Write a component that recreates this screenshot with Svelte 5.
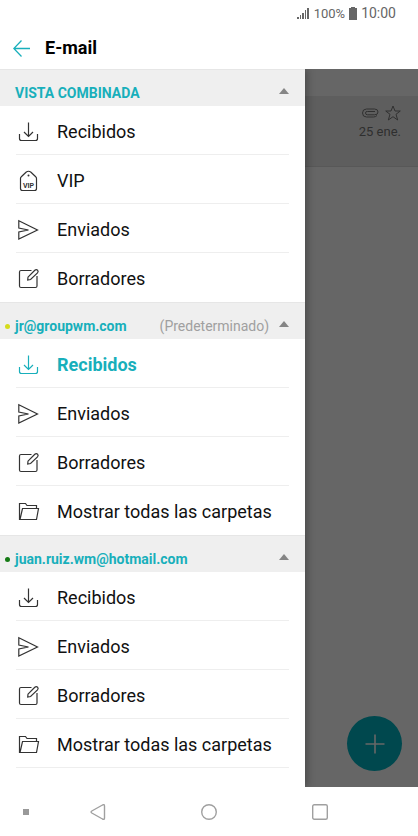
<script>
  const INBOX = { icon: 'inbox', label: 'Recibidos' };
  const SENT = { icon: 'sent', label: 'Enviados' };
  const DRAFTS = { icon: 'draft', label: 'Borradores' };
  const ALL = { icon: 'folder', label: 'Mostrar todas las carpetas' };

  const sections = [
    { title: 'VISTA COMBINADA', items: [INBOX, { icon: 'vip', label: 'VIP' }, SENT, DRAFTS] },
    { title: 'jr@groupwm.com', dot: 'yellow', note: '(Predeterminado)', items: [INBOX, SENT, DRAFTS, ALL] },
    { title: 'juan.ruiz.wm@hotmail.com', dot: 'green', items: [INBOX, SENT, DRAFTS, ALL] },
  ];

  let closed = $state([false, false, false]);
  let active = $state('1-0');
</script>

{#snippet icon(name)}
  <svg class="icon" viewBox="0 0 22 22" aria-hidden="true">
    {#if name === 'inbox'}
      <path d="M10.5 1.500v14M6 11l4.500 4.500L15 11M1.500 13v4.500q0 2 2 2h14q2 0 2-2v-4.500" />
    {:else if name === 'vip'}
      <path d="M2.500 8.500Q2.500 7.500 3.300 6.800L8 2.200Q10.500.3 13 2.200L17.700 6.800Q18.500 7.500 18.500 8.500V18.500Q18.500 20.500 16.500 20.500H4.500Q2.500 20.500 2.500 18.500Z" />
      <circle class="solid" cx="10.500" cy="5.500" r="1" />
      <text x="10.500" y="17.500" text-anchor="middle">VIP</text>
    {:else if name === 'sent'}
      <path d="M.8 1.800L19.500 11L.8 20V13L10.500 11L.8 9Z" />
    {:else if name === 'draft'}
      <path d="M13.500 2.500H3Q1.500 2.500 1.500 4V18Q1.500 19.500 3 19.500H17.500Q19 19.500 19 18V8" />
      <path d="M10 9.200L16.800 2.300Q18.300 1 19.600 2.200Q20.700 3.500 19.500 4.900L12.600 11.500L9.700 12Z" />
    {:else}
      <path d="M3 18.500H1.500V2.500H7.500L9 4.500H18.500V7M2 18.500L4.500 7.500H20.500L18.500 18.500Z" />
    {/if}
  </svg>
{/snippet}

<div class="app">
  <div class="status">
    <svg width="13" height="12" viewBox="0 0 13 12" aria-hidden="true">
      <path d="M0 10h2v2H0zM3 8h1v4H3zM5 6h2v6H5zM8 3h1v9H8zM10 1h2v11h-2z" />
    </svg>
    <span class="battery">100%</span>
    <svg width="8" height="13" viewBox="0 0 8 13" aria-hidden="true">
      <path d="M2 0h4v1h2v12H0V1h2z" />
    </svg>
    <span class="clock">10:00</span>
  </div>

  <header class="topbar">
    <button class="back" aria-label="Atrás">
      <svg width="17" height="17" viewBox="0 0 17 17" aria-hidden="true">
        <path d="M17 8.500H1M8.500.5L.8 8.500L8.500 16.500" />
      </svg>
    </button>
    <h1>E-mail</h1>
  </header>

  <main>
    <div class="mailbox">
      <div class="message">
        <div class="flags">
          <svg width="17" height="10" viewBox="0 0 17 10" aria-hidden="true">
            <path d="M15 7.500Q13.500 9 11.500 9H4.500Q.5 9 .5 5T4.500 1H12.500Q16 1 16 4T12.500 6.800H5.500Q3.500 6.800 3.500 5T5.500 3.500H13" />
          </svg>
          <svg width="16" height="16" viewBox="0 0 16 16" aria-hidden="true">
            <path d="M8 1L10 6H15.300L11 9.300L12.700 15L8 11.700L3.300 15L5 9.300L.7 6H6Z" />
          </svg>
        </div>
        <time>25 ene.</time>
      </div>
      <button class="compose" aria-label="Redactar">
        <svg width="20" height="20" viewBox="0 0 20 20" aria-hidden="true">
          <path d="M10 .5V19.500M.5 10H19.500" />
        </svg>
      </button>
    </div>

    <div class="scrim"></div>

    <nav class="drawer">
      {#each sections as section, s}
        <section>
          <button class="section-head" aria-expanded={!closed[s]} onclick={() => (closed[s] = !closed[s])}>
            <span class="dot {section.dot ?? ''}"></span>
            <span class="section-title">{section.title}</span>
            {#if section.note}
              <span class="note">{section.note}</span>
            {/if}
            <span class="caret" class:caret--down={closed[s]}></span>
          </button>
          {#if !closed[s]}
            <ul>
              {#each section.items as item, i}
                <li>
                  <button
                    class="folder"
                    class:folder--active={active === `${s}-${i}`}
                    onclick={() => (active = `${s}-${i}`)}
                  >
                    {@render icon(item.icon)}
                    <span>{item.label}</span>
                  </button>
                </li>
              {/each}
            </ul>
          {/if}
        </section>
      {/each}
    </nav>
  </main>

  <div class="navbar">
    <span class="nav-dot"></span>
    <div class="nav-keys">
      <button aria-label="Volver">
        <svg width="16" height="16" viewBox="0 0 16 16" aria-hidden="true">
          <path d="M12.500 1L1.800 7Q.3 8 1.800 9L12.500 15Q14.500 16 14.500 14V2Q14.500 0 12.500 1Z" />
        </svg>
      </button>
      <button aria-label="Inicio">
        <svg width="16" height="16" viewBox="0 0 16 16" aria-hidden="true">
          <circle cx="8" cy="8" r="7.300" />
        </svg>
      </button>
      <button aria-label="Recientes">
        <svg width="16" height="16" viewBox="0 0 16 16" aria-hidden="true">
          <rect x=".7" y=".7" width="14.600" height="14.600" rx="1.500" />
        </svg>
      </button>
    </div>
  </div>
</div>

<style>
  :global(body) {
    margin: 0;
    background: #fff;
  }

  .app {
    --accent: #18afbb;
    min-height: 100vh;
    display: flex;
    flex-direction: column;
    font-family: Roboto, "Liberation Sans", sans-serif;
    color: #111;
  }

  button {
    font: inherit;
    color: inherit;
    background: none;
    border: none;
    padding: 0;
    cursor: pointer;
  }

  svg {
    flex-shrink: 0;
    fill: none;
    stroke: currentColor;
  }

  .status {
    height: 26px;
    padding-right: 22px;
    display: flex;
    align-items: center;
    justify-content: flex-end;
    gap: 4px;
    color: #666;
  }

  .status svg {
    fill: currentColor;
    stroke: none;
  }

  .battery {
    font-size: 13px;
  }

  .clock {
    font-size: 14px;
  }

  .topbar {
    box-sizing: border-box;
    height: 43px;
    padding: 1px 13px 0;
    display: flex;
    align-items: center;
    gap: 15px;
  }

  .back {
    display: flex;
    color: var(--accent);
  }

  .back svg {
    stroke-width: 1.3;
  }

  h1 {
    margin: 0;
    font-size: 18px;
    line-height: 24px;
    font-weight: 700;
    color: #000;
  }

  main {
    flex: 1;
    display: grid;
    grid-template-columns: minmax(0, 1fr);
  }

  .mailbox,
  .scrim,
  .drawer {
    grid-area: 1 / 1;
  }

  .mailbox {
    padding-top: 27px;
    display: flex;
    flex-direction: column;
    justify-content: space-between;
    align-items: flex-end;
  }

  .message {
    box-sizing: border-box;
    width: 100%;
    height: 71px;
    padding: 9px 17px;
    display: flex;
    flex-direction: column;
    align-items: flex-end;
    gap: 2px;
    background: #ececec;
    border-bottom: 1px solid #ddd;
    color: #777;
  }

  .flags {
    display: flex;
    align-items: center;
    gap: 6px;
  }

  time {
    font-size: 13px;
    line-height: 18px;
  }

  .compose {
    width: 55px;
    height: 55px;
    margin: 0 16px 16px;
    display: flex;
    align-items: center;
    justify-content: center;
    border-radius: 50%;
    background: #00b4c3;
    color: #fff;
  }

  .compose svg {
    stroke-width: 1.6;
  }

  .scrim {
    background: rgba(0, 0, 0, 0.6);
    z-index: 1;
  }

  .drawer {
    z-index: 2;
    width: 73%;
    background: #fff;
    box-shadow: 2px 0 8px rgba(0, 0, 0, 0.3);
    clip-path: inset(0 -16px 0 0);
  }

  .section-head {
    box-sizing: border-box;
    width: 100%;
    height: 37px;
    padding: 10px 16px 0 5px;
    display: flex;
    align-items: center;
    background: #efefef;
    border-top: 1px solid #e6e6e6;
    text-align: left;
    font-size: 14px;
    line-height: 20px;
  }

  .dot {
    width: 5px;
    height: 5px;
    margin-right: 5px;
    border-radius: 50%;
  }

  .yellow {
    background: #d5dc1c;
  }

  .green {
    background: #157a15;
  }

  .section-title {
    flex: 1;
    font-weight: 700;
    color: var(--accent);
  }

  .note {
    color: #a0a0a0;
  }

  .caret {
    margin: 0 0 4px 10px;
    border: solid transparent;
    border-width: 0 5px 6px;
    border-bottom-color: #858585;
  }

  .caret--down {
    rotate: 180deg;
  }

  ul {
    margin: 0;
    padding: 0 16px;
    list-style: none;
  }

  li {
    border-bottom: 1px solid #eee;
  }

  section:not(:last-child) li:last-child {
    border-bottom-color: transparent;
  }

  .folder {
    box-sizing: border-box;
    width: 100%;
    height: 48px;
    padding: 3px 2px 0;
    display: flex;
    align-items: center;
    gap: 17px;
    text-align: left;
    font-size: 18px;
    line-height: 24px;
  }

  .icon {
    width: 22px;
    height: 22px;
    stroke-width: 1.2;
    color: #333;
  }

  .icon text {
    font-size: 7px;
    font-weight: 700;
    fill: currentColor;
    stroke: none;
  }

  .solid {
    fill: currentColor;
    stroke: none;
  }

  .folder--active {
    font-weight: 700;
    color: var(--accent);
  }

  .folder--active .icon {
    color: var(--accent);
  }

  .navbar {
    height: 49px;
    padding: 0 90px 0 23px;
    display: flex;
    align-items: center;
    color: #a0a0a0;
  }

  .nav-keys {
    flex: 1;
    margin-left: 61px;
    display: flex;
    justify-content: space-between;
  }

  .navbar button {
    display: flex;
  }

  .navbar svg {
    stroke-width: 1.4;
  }

  .nav-dot {
    width: 6px;
    height: 6px;
    background: #999;
  }
</style>
